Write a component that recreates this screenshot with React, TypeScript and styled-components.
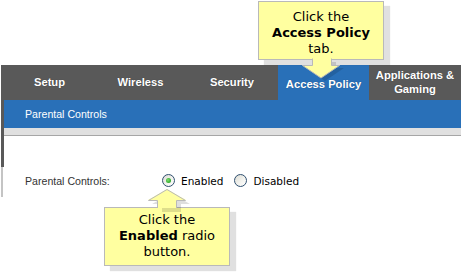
import styled, { createGlobalStyle } from 'styled-components';

const GlobalStyle = createGlobalStyle`
  html, body {
    margin: 0;
    padding: 0;
    background: #fff;
  }
`;

interface TabInfo {
    label: string[];
    width?: number;
    active?: boolean;
}

const tabs: TabInfo[] = [
    { label: ['Setup'], width: 91 },
    { label: ['Wireless'], width: 91 },
    { label: ['Security'], width: 92 },
    { label: ['Access Policy'], width: 91, active: true },
    { label: ['Applications &', 'Gaming'] },
];

const YELLOW = '#ffffa0';
const EDGE = '#b9b9b9';

// down arrow under the top callout, up arrow over the bottom one
const DownArrow = () => (
    <ArrowSvg $left={302} $top={58} width={44} height={24}>
        <polygon points="14,4 34,4 34,10 42,10 23,23 4,10 14,10" fill="rgba(0,0,0,0.13)" />
        <polygon points="10,0 30,0 30,7 38,7 19,20 0,7 10,7" fill={YELLOW} />
        <polyline points="10.5,0.5 10.5,7.5 0.5,7.5 19,20 37.5,7.5 29.5,7.5 29.5,0.5" fill="none" stroke={EDGE} />
    </ArrowSvg>
);

const UpArrow = () => (
    <ArrowSvg $left={148} $top={189} width={44} height={24}>
        <polygon points="23,4 42,15 33,15 33,23 14,23 14,15 4,15" fill="rgba(0,0,0,0.13)" />
        <polygon points="19,0 38,11 29,11 29,19 9,19 9,11 0,11" fill={YELLOW} />
        <polyline points="9.5,19 9.5,11.5 0.5,11.5 19,0.5 37.5,11.5 28.5,11.5 28.5,19" fill="none" stroke={EDGE} />
    </ArrowSvg>
);

const App = () => {
  return (
    <Page>
        <GlobalStyle />
        <Frame>
            <TabBar>
                {tabs.map((t) => (
                    <Tab key={t.label.join(' ')} $width={t.width} $active={t.active}>
                        <span>{t.label.map((line) => <div key={line}>{line}</div>)}</span>
                    </Tab>
                ))}
            </TabBar>
            <SubBar>Parental Controls</SubBar>
            <Strip />
        </Frame>

        <ContentPanel>
            <Row>
                <Label>Parental Controls:</Label>
                <RadioOption>
                    <Radio $checked />
                    Enabled
                </RadioOption>
                <RadioOption>
                    <Radio />
                    Disabled
                </RadioOption>
            </Row>
        </ContentPanel>

        <Callout $left={258} $top={1} $pad={7}>
            Click the<br />
            <b>Access Policy</b><br />
            tab.
        </Callout>
        <DownArrow />

        <Callout $left={104} $top={207} $pad={4}>
            Click the<br />
            <b>Enabled</b> radio<br />
            button.
        </Callout>
        <UpArrow />
    </Page>
  )
}

export default App

const Page = styled.div`
    position: relative;
    width: 461px;
    height: 275px;
    padding-top: 65px;
    box-sizing: border-box;
    overflow: hidden;
    background: #fff;
`;

const Frame = styled.div`
    margin-left: 1px;
    padding-left: 3px;
    background: #595959;
`;

const TabBar = styled.div`
    display: flex;
    height: 35px;
    background: #595959;
`;

const Tab = styled.div<{ $width?: number; $active?: boolean }>`
    display: flex;
    align-items: center;
    justify-content: center;
    ${(p) => (p.$width ? `width: ${p.$width}px;` : 'flex: 1;')}
    box-sizing: border-box;
    padding: ${(p) => (p.$active ? '2px 0 0' : '0 0 2px')};
    background: ${(p) => (p.$active ? '#2970b8' : 'transparent')};
    color: #fff;
    font-family: "Liberation Sans", Arial, sans-serif;
    font-weight: bold;
    font-size: 11.2px;
    line-height: 14px;
    text-align: center;
    text-shadow: 0 0 1px rgba(0, 0, 0, 0.35);
`;

const SubBar = styled.div`
    display: flex;
    align-items: center;
    height: 28px;
    padding-left: 21px;
    background: #2970b8;
    color: #fff;
    font-family: "Liberation Sans", Arial, sans-serif;
    font-size: 10.6px;
`;

const Strip = styled.div`
    height: 7px;
    background: #e0e0e0;
    border-bottom: 1px solid #a6a6a6;
`;

const ContentPanel = styled.div`
    margin-left: 1px;
    height: 61px;
    box-sizing: border-box;
    padding: 38px 0 0 24px;
    background:
        linear-gradient(#595959, #595959) left top / 3px 31px no-repeat,
        linear-gradient(#c4c4c4, #c4c4c4) left 31px / 2px 30px no-repeat,
        #fff;
`;

const Row = styled.div`
    display: flex;
    align-items: center;
    height: 13px;
`;

const Label = styled.div`
    width: 137px;
    color: #333;
    font-family: "Liberation Sans", Arial, sans-serif;
    font-size: 10.6px;
`;

const RadioOption = styled.label`
    display: flex;
    align-items: center;
    gap: 6px;
    margin-right: 11px;
    color: #000;
    font-family: "DejaVu Sans", Verdana, sans-serif;
    font-size: 10.5px;
`;

const Radio = styled.span<{ $checked?: boolean }>`
    position: relative;
    width: 13px;
    height: 13px;
    box-sizing: border-box;
    border-radius: 50%;
    border: 1px solid #2f4f6f;
    background: linear-gradient(135deg, #dcdcd4 0%, #f4f4f0 60%, #ffffff 100%);

    &::after {
        content: '';
        display: ${(p) => (p.$checked ? 'block' : 'none')};
        position: absolute;
        left: 3px;
        top: 3px;
        width: 5px;
        height: 5px;
        border-radius: 50%;
        background: radial-gradient(circle at 40% 40%, #7ee06c 0%, #2da82a 70%, #1f8a1f 100%);
    }
`;

const Callout = styled.div<{ $left: number; $top: number; $pad: number }>`
    position: absolute;
    left: ${(p) => p.$left}px;
    top: ${(p) => p.$top}px;
    width: 126px;
    height: 59px;
    box-sizing: border-box;
    padding-top: ${(p) => p.$pad}px;
    background: ${YELLOW};
    border: 1px solid ${EDGE};
    box-shadow: 6px 5px 1px rgba(0, 0, 0, 0.12);
    color: #000;
    font-family: "DejaVu Sans", Verdana, sans-serif;
    font-size: 13px;
    line-height: 16px;
    text-align: center;

    b {
        font-weight: bold;
    }
`;

const ArrowSvg = styled.svg<{ $left: number; $top: number }>`
    position: absolute;
    left: ${(p) => p.$left}px;
    top: ${(p) => p.$top}px;
    overflow: visible;
`;
